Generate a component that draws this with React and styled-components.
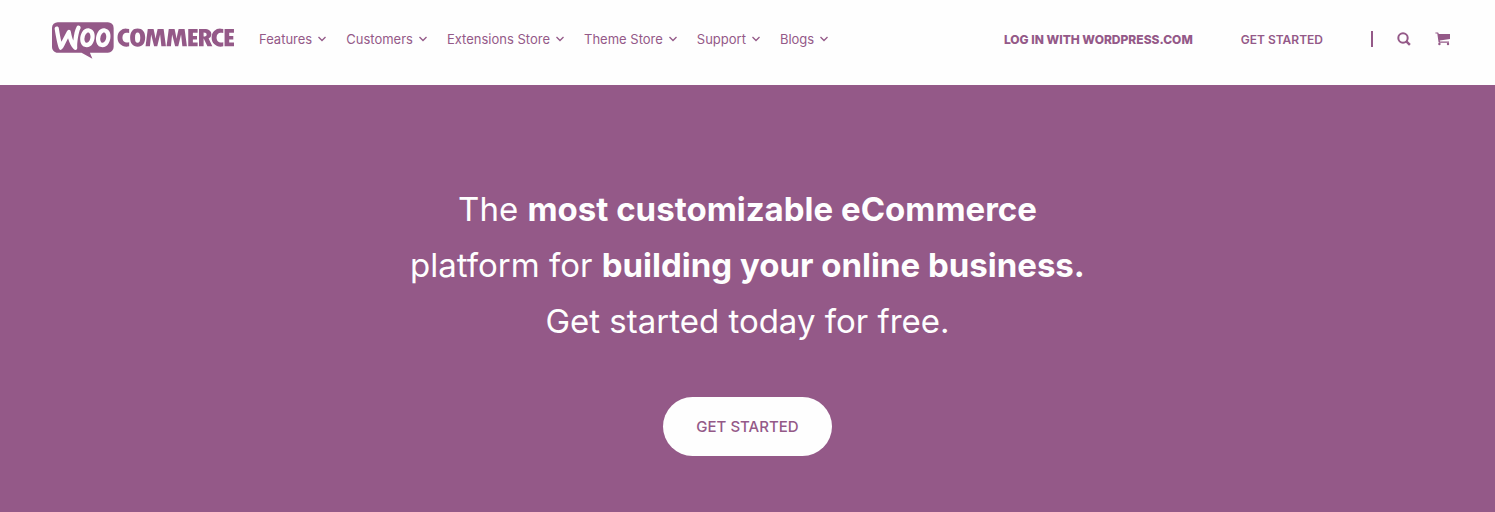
import React from "react";
import styled, { createGlobalStyle } from "styled-components";
import { SiWoocommerce } from "react-icons/si";

const PURPLE = "#945988";

const GlobalStyle = createGlobalStyle`
  *, *::before, *::after { box-sizing: border-box; }
  body {
    margin: 0;
    background: ${PURPLE};
    color: ${PURPLE};
    font-family: Inter, "Liberation Sans", sans-serif;
  }
  a { color: inherit; text-decoration: none; }
`;

const Header = styled.header`
  display: flex;
  align-items: center;
  min-height: 85px;
  padding: 0 44px 8px 52px;
  background: #fefefe;
`;

const Logo = styled.a`
  display: flex;
  margin-right: 25px;
  padding-top: 4px;
`;

const LogoMark = styled(SiWoocommerce)`
  width: 182px;
  height: 37px;
`;

const Nav = styled.nav`
  display: flex;
  align-items: center;
  gap: 20px;
`;

const MenuButton = styled.button`
  display: flex;
  align-items: center;
  gap: 6px;
  padding: 0;
  border: 0;
  background: none;
  color: inherit;
  font: 400 13px/20px Inter, "Liberation Sans", sans-serif;
  white-space: nowrap;
  cursor: pointer;
`;

const Account = styled.div`
  display: flex;
  align-items: center;
  margin-left: auto;
  gap: 48px;
`;

const AccountLink = styled.a`
  padding-top: 2px;
  font-size: 12px;
  line-height: 20px;
  font-weight: ${(p) => (p.$strong ? 800 : 600)};
  white-space: nowrap;
`;

const Tools = styled.div`
  display: flex;
  align-items: center;
  gap: 24px;
  min-height: 16px;
  padding-left: 24px;
  border-left: 2px solid ${PURPLE};
`;

const IconButton = styled.button`
  display: flex;
  padding: 0;
  border: 0;
  background: none;
  color: inherit;
  cursor: pointer;
`;

const Hero = styled.main`
  display: flex;
  flex-direction: column;
  align-items: center;
  gap: 48px;
  padding: 96px 24px 56px;
  background: ${PURPLE};
`;

const Headline = styled.h1`
  margin: 0;
  color: #fefefe;
  font-size: 33px;
  line-height: 56px;
  font-weight: 400;
  text-align: center;

  strong { font-weight: 700; }
`;

const StartButton = styled.a`
  padding: 20px 33px;
  border-radius: 30px;
  background: #fefefe;
  font-size: 15px;
  line-height: 19px;
  font-weight: 500;
`;

const menus = ["Features", "Customers", "Extensions Store", "Theme Store", "Support", "Blogs"];

function Chevron() {
  return (
    <svg width="8" height="6" viewBox="0 0 8 6" fill="none" stroke="currentColor" strokeWidth="1.3" aria-hidden="true">
      <path d="M0.5 1l3.5 3.5L7.5 1" />
    </svg>
  );
}

function SearchIcon() {
  return (
    <svg width="14" height="14" viewBox="0 0 14 14" fill="none" stroke="currentColor" aria-hidden="true">
      <circle cx="6" cy="6" r="4.7" strokeWidth="2" />
      <path d="M9.3 9.3l3.6 3.6" strokeWidth="2.4" />
    </svg>
  );
}

function CartIcon() {
  return (
    <svg width="16" height="14" viewBox="0 0 16 14" fill="currentColor" aria-hidden="true">
      <path d="M0.4 0.4h2.4q.6 0 .7.6l.2 1.1H15v5L4.8 8.4l.2 1.1h9v1.2H4.2q-.6 0-.7-.6L2.3 1.6H.4z" />
      <circle cx="4.4" cy="12" r="1.2" />
      <circle cx="13" cy="12" r="1.2" />
    </svg>
  );
}

export default function App() {
  return (
    <>
      <GlobalStyle />
      <Header>
        <Logo href="#" aria-label="WooCommerce">
          <LogoMark viewBox="0 9.56 24 4.88" aria-hidden="true" />
        </Logo>
        <Nav>
          {menus.map((label) => (
            <MenuButton key={label} type="button">
              {label}
              <Chevron />
            </MenuButton>
          ))}
        </Nav>
        <Account>
          <AccountLink href="#" $strong>LOG IN WITH WORDPRESS.COM</AccountLink>
          <AccountLink href="#">GET STARTED</AccountLink>
          <Tools>
            <IconButton type="button" aria-label="Search"><SearchIcon /></IconButton>
            <IconButton type="button" aria-label="Cart"><CartIcon /></IconButton>
          </Tools>
        </Account>
      </Header>
      <Hero>
        <Headline>
          The <strong>most customizable eCommerce</strong>
          <br />
          platform for <strong>building your online business.</strong>
          <br />
          Get started today for free.
        </Headline>
        <StartButton href="#">GET STARTED</StartButton>
      </Hero>
    </>
  );
}
